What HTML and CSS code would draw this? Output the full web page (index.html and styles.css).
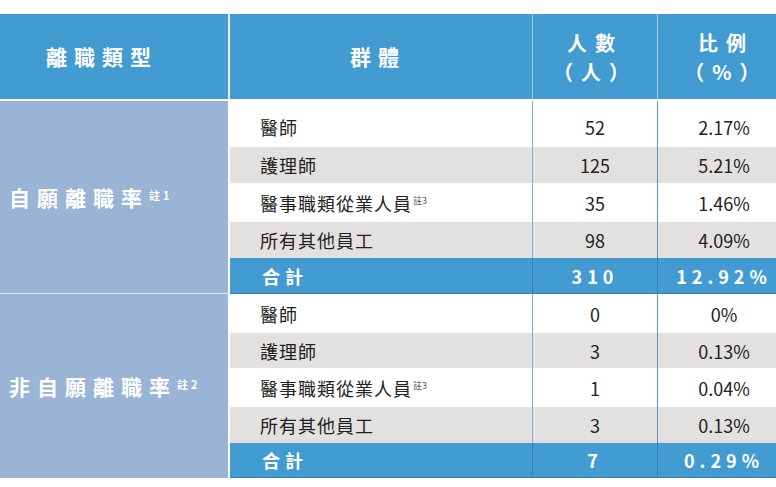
FILE: index.html
```html
<!DOCTYPE html>
<html lang="zh-Hant">
<head>
<meta charset="utf-8">
<title>離職率</title>
<link rel="stylesheet" href="styles.css">
</head>
<body>
<div class="tbl">
  <div class="row head">
    <div class="cell c1"><span>離職類型</span></div>
    <div class="cell c2"><span>群體</span></div>
    <div class="cell c3 two"><span class="ln">人數</span><span class="ln">（人）</span></div>
    <div class="cell c4 two"><span class="ln">比例</span><span class="ln">（%）</span></div>
  </div>

  <div class="cell cat s1"><span>自願離職率<sup>註1</sup></span></div>
  <div class="row white first">
    <div class="cell c2"><span>醫師</span></div><div class="cell c3">52</div><div class="cell c4">2.17%</div>
  </div>
  <div class="row gray">
    <div class="cell c2"><span>護理師</span></div><div class="cell c3">125</div><div class="cell c4">5.21%</div>
  </div>
  <div class="row white">
    <div class="cell c2"><span>醫事職類從業人員<sup>註3</sup></span></div><div class="cell c3">35</div><div class="cell c4">1.46%</div>
  </div>
  <div class="row gray">
    <div class="cell c2"><span>所有其他員工</span></div><div class="cell c3">98</div><div class="cell c4">4.09%</div>
  </div>
  <div class="row tot">
    <div class="cell c2"><span>合計</span></div><div class="cell c3">310</div><div class="cell c4">12.92%</div>
  </div>

  <div class="cell cat s2"><span>非自願離職率<sup>註2</sup></span></div>
  <div class="row white">
    <div class="cell c2"><span>醫師</span></div><div class="cell c3">0</div><div class="cell c4">0%</div>
  </div>
  <div class="row gray">
    <div class="cell c2"><span>護理師</span></div><div class="cell c3">3</div><div class="cell c4">0.13%</div>
  </div>
  <div class="row white">
    <div class="cell c2"><span>醫事職類從業人員<sup>註3</sup></span></div><div class="cell c3">1</div><div class="cell c4">0.04%</div>
  </div>
  <div class="row gray">
    <div class="cell c2"><span>所有其他員工</span></div><div class="cell c3">3</div><div class="cell c4">0.13%</div>
  </div>
  <div class="row tot">
    <div class="cell c2"><span>合計</span></div><div class="cell c3">7</div><div class="cell c4">0.29%</div>
  </div>
</div>
</body>
</html>
```

FILE: styles.css
```css
html, body {
  margin: 0;
  background: #ffffff;
  overflow: hidden;
}

body {
  padding-top: 14px;
  font-family: "Noto Sans CJK TC", "Noto Sans", sans-serif;
  color: #222222;
}

.tbl {
  display: grid;
  grid-template-columns: 230px 303px 125px 118px;
  grid-template-rows: 87px 46px 36px 39px 36px 36px 39px 35px 39px 36px 35px;
}

.row {
  display: contents;
}

.cell {
  display: flex;
  align-items: center;
  box-sizing: border-box;
  min-width: 0;
  white-space: nowrap;
}

/* data cells */
.c2 {
  grid-column: 2;
  padding-left: 30px;
  font-size: 18px;
  letter-spacing: 1px;
  border-right: 1px solid #74b1dd;
}

.c2 sup {
  font-size: 9px;
  letter-spacing: 0;
  line-height: 0;
  color: #555555;
  vertical-align: 7px;
  margin-left: 1px;
}

.c3 {
  grid-column: 3;
  justify-content: center;
  font-size: 18px;
  border-right: 1px solid #5195c9;
}

.c4 {
  grid-column: 4;
  justify-content: center;
  font-size: 18px;
  padding-left: 14px;
}

/* header */
.head .cell {
  background: #429cd2;
  color: #ffffff;
  font-weight: 700;
  font-size: 21px;
  letter-spacing: 7px;
  line-height: 27px;
  justify-content: center;
  text-align: center;
  border-bottom: 2px solid #ffffff;
}

.head .two {
  flex-direction: column;
  font-size: 20px;
  letter-spacing: 8px;
  line-height: 29px;
  padding-top: 1px;
}

.head .ln {
  display: block;
}

.head .c1 {
  grid-column: 1;
  padding-right: 24px;
  border-right: 2px solid #e3eef7;
}

.head .c2 {
  padding-left: 0;
  padding-right: 6px;
}

.head .c2,
.head .c3 {
  border-right: 1px solid #a6cbe7;
}

.head .c4 {
  padding-left: 18px;
}

/* category cells */
.cat {
  grid-column: 1;
  grid-row: span 5;
  background: #9ab4d6;
  color: #ffffff;
  font-weight: 700;
  font-size: 21px;
  letter-spacing: 7px;
  padding-left: 9px;
  border-right: 2px solid #ffffff;
}

.cat.s1 {
  border-bottom: 1px solid #dfe7f2;
}

.cat sup {
  font-size: 11px;
  letter-spacing: 3px;
  line-height: 0;
  vertical-align: 6px;
}

/* rows */
.white .cell {
  background: #ffffff;
}

.gray .cell {
  background: #e2e1df;
}

.first .cell {
  padding-top: 6px;
}

.tot .cell {
  background: #429cd2;
  color: #ffffff;
  font-weight: 700;
  letter-spacing: 5px;
  border-bottom: 1px solid #3a7fb3;
}

.tot .c2 {
  padding-left: 32px;
  border-right-color: #3a7fb3;
}

.tot .c3 {
  border-right-color: #3a7fb3;
}
```
